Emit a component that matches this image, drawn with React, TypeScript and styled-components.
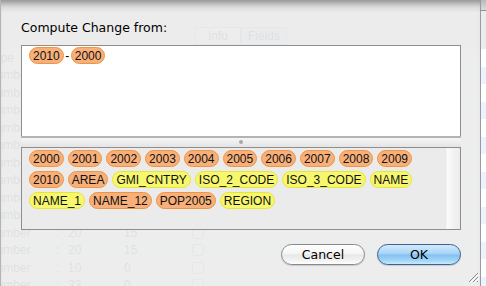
import React from 'react'
import styled, { createGlobalStyle } from 'styled-components'

const GlobalStyle = createGlobalStyle`
  html, body {
    margin: 0;
    padding: 0;
  }
  body {
    width: 486px;
    height: 286px;
    overflow: hidden;
    background: #fff;
    font-family: 'Liberation Sans', Arial, sans-serif;
  }
`

type Kind = 'num' | 'text'

const expression: { label: string; kind: Kind }[] = [
  { label: '2010', kind: 'num' },
  { label: '2000', kind: 'num' },
]

const fields: { label: string; kind: Kind }[] = [
  { label: '2000', kind: 'num' },
  { label: '2001', kind: 'num' },
  { label: '2002', kind: 'num' },
  { label: '2003', kind: 'num' },
  { label: '2004', kind: 'num' },
  { label: '2005', kind: 'num' },
  { label: '2006', kind: 'num' },
  { label: '2007', kind: 'num' },
  { label: '2008', kind: 'num' },
  { label: '2009', kind: 'num' },
  { label: '2010', kind: 'num' },
  { label: 'AREA', kind: 'num' },
  { label: 'GMI_CNTRY', kind: 'text' },
  { label: 'ISO_2_CODE', kind: 'text' },
  { label: 'ISO_3_CODE', kind: 'text' },
  { label: 'NAME', kind: 'text' },
  { label: 'NAME_1', kind: 'text' },
  { label: 'NAME_12', kind: 'num' },
  { label: 'POP2005', kind: 'num' },
  { label: 'REGION', kind: 'text' },
]

// rows of the window behind the sheet (only faintly visible through it)
const backRows = [
  ['Type', '', ''],
  ['Number', '20', '15'],
  ['Number', '20', '15'],
  ['Number', '10', '0'],
  ['Number', '33', '0'],
  ['Number', '20', '15'],
  ['Number', '20', '15'],
  ['Number', '20', '15'],
  ['Number', '10', '0'],
  ['Number', '33', '0'],
  ['Number', '20', '15'],
  ['Number', '20', '15'],
  ['Number', '10', '0'],
  ['Number', '33', '0'],
]

const Screen = styled.div`
  position: relative;
  width: 486px;
  height: 286px;
  overflow: hidden;
`

const BackWindow = styled.div`
  display: flex;
  flex-direction: column;
  width: 100%;
  height: 100%;
  overflow: hidden;
  background: #ececec;
  font-size: 12px;
  color: #222;
`

const BackToolbar = styled.div`
  flex-shrink: 0;
  height: 10px;
  background: linear-gradient(#b8b8b8, #dcdcdc);
  border-bottom: 1px solid #8c8c8c;
`

const BackTabs = styled.div`
  display: flex;
  flex-shrink: 0;
  height: 22px;
  margin: 16px 0 0 195px;
`

const BackTab = styled.div<{ $on?: boolean }>`
  width: 44px;
  height: 16px;
  border: 1px solid #999;
  background: ${({ $on }) => ($on ? '#bcd3f2' : '#f4f4f4')};
  text-align: center;
  line-height: 16px;
`

const BackTable = styled.div`
  display: flex;
  flex-direction: column;
  flex-shrink: 0;
  background: #fff;
`

const BackRow = styled.div<{ $alt: boolean }>`
  display: grid;
  grid-template-columns: 68px 12px 56px 68px 20px;
  align-items: center;
  flex-shrink: 0;
  height: 17.5px;
  margin-left: -12px;
  background: ${({ $alt }) => ($alt ? '#edf3fe' : '#fff')};
`

const BackCheck = styled.span`
  width: 10px;
  height: 10px;
  border: 1px solid #888;
  border-radius: 2px;
`

const Sheet = styled.div`
  position: absolute;
  top: 0;
  left: 0;
  width: 481px;
  height: 286px;
  box-sizing: border-box;
  display: flex;
  flex-direction: column;
  padding: 20px 19px 0 20px;
  border-left: 1px solid #b4b4b4;
  border-right: 1px solid #9a9a9a;
  background: rgba(236, 236, 236, 0.94);
  box-shadow: inset 0 10px 9px -7px rgba(0, 0, 0, 0.45);
`

const Label = styled.div`
  height: 15px;
  margin-bottom: 10px;
  font-family: 'DejaVu Sans', 'Liberation Sans', sans-serif;
  font-size: 12.5px;
  line-height: 15px;
  color: #000;
`

const ExprBox = styled.div`
  display: flex;
  align-items: flex-start;
  height: 91px;
  box-sizing: border-box;
  padding: 1px 7px 0;
  background: #fff;
  border: 1px solid #8e8e8e;
  border-bottom: none;
`

const ExprLine = styled.div`
  display: flex;
  align-items: center;
  font-size: 12px;
`

const Minus = styled.span`
  margin: 0 1.5px;
  font-size: 12px;
`

const Splitter = styled.div`
  display: flex;
  align-items: center;
  justify-content: center;
  height: 11px;
  box-sizing: border-box;
  border-top: 2px solid #b3b3b3;
  background: linear-gradient(#f6f6f6, #e4e4e4);
`

const SplitDot = styled.span`
  width: 4px;
  height: 4px;
  margin-bottom: 2px;
  border-radius: 50%;
  background: #a8a8a8;
`

const TokenBox = styled.div`
  display: flex;
  height: 83px;
  box-sizing: border-box;
  border: 1px solid #8e8e8e;
  background: #ebebeb;
`

const TokenArea = styled.div`
  flex: 1;
  display: flex;
  flex-wrap: wrap;
  align-content: flex-start;
  gap: 4px 4px;
  padding: 2px 14px 0 7px;
`

const Scroller = styled.div`
  width: 15px;
  background: linear-gradient(to right, #e2e2e2 0, #fbfbfb 2px, #f2f2f2 60%, #ececec 100%);
`

const Token = styled.span<{ $kind: Kind }>`
  display: inline-flex;
  align-items: center;
  height: 17px;
  box-sizing: border-box;
  padding: 0 3px;
  border: 1px solid ${({ $kind }) => ($kind === 'num' ? '#ef9440' : '#e6e63a')};
  border-radius: 9px;
  background: ${({ $kind }) => ($kind === 'num' ? '#f8b07b' : '#f7f76f')};
  font-family: 'Liberation Sans', Arial, sans-serif;
  font-size: 12px;
  color: #111;
  white-space: nowrap;
`

const ButtonRow = styled.div`
  display: flex;
  justify-content: flex-end;
  gap: 12px;
  margin-top: 14px;
`

const Button = styled.button<{ $primary?: boolean }>`
  width: 84px;
  height: 21px;
  padding: 0;
  border-radius: 11px;
  border: 1px solid ${({ $primary }) => ($primary ? '#3f5f8e' : '#8a8a8a')};
  background: ${({ $primary }) =>
    $primary
      ? 'linear-gradient(#d3eafc 0%, #a9d4f7 45%, #84c2f3 52%, #9fd4f7 80%, #c6ecfc 100%)'
      : 'linear-gradient(#ffffff 0%, #f4f4f4 45%, #e8e8e8 52%, #f2f2f2 80%, #ffffff 100%)'};
  box-shadow: 0 1px 1px rgba(0, 0, 0, 0.15);
  font-family: 'DejaVu Sans', 'Liberation Sans', sans-serif;
  font-size: 12.5px;
  color: #000;
`

const Grip = styled.svg`
  position: absolute;
  right: 1px;
  bottom: 3px;
`

const App = () => {
  return (
    <Screen>
      <GlobalStyle />
      <BackWindow>
        <BackToolbar />
        <BackTabs>
          <BackTab>Info</BackTab>
          <BackTab $on>Fields</BackTab>
        </BackTabs>
        <BackTable>
          {backRows.map((r, i) => (
            <BackRow key={i} $alt={i % 2 === 1}>
              <span>{r[0]}</span>
              <span>{r[1] ? ':' : ''}</span>
              <span>{r[1]}</span>
              <span>{r[2]}</span>
              {r[1] ? <BackCheck /> : <span />}
            </BackRow>
          ))}
        </BackTable>
      </BackWindow>

      <Sheet>
        <Label>Compute Change from:</Label>
        <ExprBox>
          <ExprLine>
            <Token $kind={expression[0].kind}>{expression[0].label}</Token>
            <Minus>-</Minus>
            <Token $kind={expression[1].kind}>{expression[1].label}</Token>
          </ExprLine>
        </ExprBox>
        <Splitter>
          <SplitDot />
        </Splitter>
        <TokenBox>
          <TokenArea>
            {fields.map((f, i) => (
              <Token key={i} $kind={f.kind}>
                {f.label}
              </Token>
            ))}
          </TokenArea>
          <Scroller />
        </TokenBox>
        <ButtonRow>
          <Button type="button">Cancel</Button>
          <Button type="button" $primary>
            OK
          </Button>
        </ButtonRow>
        <Grip width="11" height="11" viewBox="0 0 11 11">
          <path d="M10 1 L1 10 M10 5 L5 10 M10 9 L9 10" stroke="#8a8a8a" strokeWidth="1" />
          <path d="M11 2 L2 11 M11 6 L6 11" stroke="#fff" strokeWidth="1" />
        </Grip>
      </Sheet>
    </Screen>
  )
}

export default App
